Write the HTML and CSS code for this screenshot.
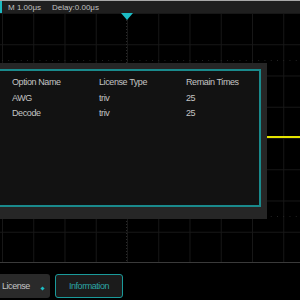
FILE: index.html
```html
<!DOCTYPE html>
<html lang="en">
<head>
  <meta charset="UTF-8">
  <title>License Information</title>
  <link rel="stylesheet" href="styles.css">
</head>
<body>

  <!-- Status bar -->
  <div class="topbar">
    <span class="ch-mark"></span>
    <span class="timebase">M 1.00μs</span>
    <span class="delay">Delay:0.00μs</span>
  </div>

  <!-- Waveform area -->
  <div class="screen">
    <div class="tick-row tick-top"></div>
    <div class="tick-row tick-mid"></div>
    <div class="tick-row tick-bottom"></div>
    <div class="trig-line"></div>
    <div class="trig-marker"></div>
    <div class="trace"></div>

    <div class="dialog">
      <div class="dialog-panel">
        <div class="license-table">
          <div class="cell">Option Name</div>
          <div class="cell">License Type</div>
          <div class="cell">Remain Times</div>
          <div class="cell">AWG</div>
          <div class="cell">triv</div>
          <div class="cell">25</div>
          <div class="cell">Decode</div>
          <div class="cell">triv</div>
          <div class="cell">25</div>
        </div>
      </div>
    </div>
  </div>

  <!-- Soft keys -->
  <div class="softkeys">
    <button class="softkey">License<span class="knob-dot"></span></button>
    <button class="softkey active">Information</button>
  </div>

</body>
</html>
```

FILE: styles.css
```css
body {
  margin: 0;
  width: 300px;
  height: 300px;
  overflow: hidden;
  background: #000;
  font-family: "Liberation Sans", Arial, sans-serif;
  color: #c4c4c4;
}

.topbar {
  height: 12px;
  border-top: 1px solid #a8a8a8;
  background: #1f1f1f;
  display: flex;
  align-items: center;
  font-size: 8px;
  color: #c0c0c0;
}

.ch-mark {
  width: 2px;
  height: 12px;
  background: #1cb8c0;
}

.timebase {
  margin-left: 6px;
}

.delay {
  margin-left: 11px;
}

.screen {
  position: relative;
  height: 249px;
  border-bottom: 1px solid #3a3a3a;
  background-color: #000;
  background-image:
    linear-gradient(to right, #171717 1px, transparent 1px),
    linear-gradient(to bottom, #171717 1px, transparent 1px);
  background-size: 31.25px 31.25px;
  background-position: 2px 0, 0 0;
}

.tick-row {
  position: absolute;
  left: 0;
  right: 0;
  height: 1px;
  background-image: linear-gradient(to right, #262626 1px, transparent 1px);
  background-size: 6.25px 1px;
  background-position: 2px 0;
}

.tick-top { top: 47px; }
.tick-mid { top: 124px; }
.tick-bottom { top: 203px; }

.trig-line {
  position: absolute;
  left: 126px;
  top: 7px;
  bottom: 0;
  width: 1px;
  background-image: linear-gradient(to bottom, #2a2a2a 1px, transparent 1px);
  background-size: 1px 3px;
}

.trig-marker {
  position: absolute;
  left: 121px;
  top: 0;
  width: 0;
  height: 0;
  border-left: 6px solid transparent;
  border-right: 6px solid transparent;
  border-top: 7px solid #1cbcc4;
}

.trace {
  position: absolute;
  left: 267px;
  top: 123px;
  width: 33px;
  height: 2px;
  background: #e4e400;
}

.dialog {
  position: absolute;
  left: -10px;
  top: 50px;
  width: 271px;
  height: 144px;
  padding: 6px 6px 6px 0;
  background: #262626;
}

.dialog-panel {
  height: 134px;
  border: 2px solid #1a8a8c;
  background: #121212;
}

.license-table {
  display: grid;
  grid-template-columns: 87px 87px 1fr;
  padding: 4px 0 0 20px;
  font-size: 9px;
  line-height: 15.5px;
  letter-spacing: -0.4px;
  color: #c4c4c4;
}

.softkeys {
  display: flex;
  gap: 5px;
  padding-top: 11px;
}

.softkey {
  position: relative;
  height: 24px;
  border: none;
  border-radius: 3px;
  background: #2a2a2a;
  color: #c4c4c4;
  font-family: "Liberation Sans", Arial, sans-serif;
  font-size: 9px;
  letter-spacing: -0.45px;
  padding: 0;
}

.softkey:first-child {
  width: 54px;
  margin-left: -4px;
  text-align: left;
  padding-left: 6px;
}

.knob-dot {
  position: absolute;
  left: 45px;
  top: 13px;
  width: 3px;
  height: 3px;
  background: #1cbcc4;
  transform: rotate(45deg);
}

.softkey.active {
  width: 68px;
  border: 1.5px solid #1a9a9a;
  background: #1b1b1b;
  color: #2ba5a5;
  text-align: center;
}
```
